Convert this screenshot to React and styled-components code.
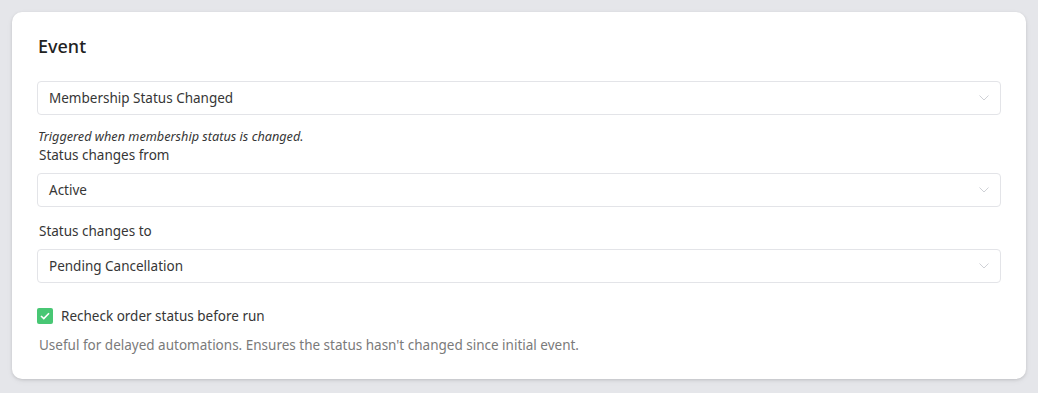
import React from "react";
import styled, { createGlobalStyle } from "styled-components";

const Global = createGlobalStyle`
  html, body { margin: 0; padding: 0; background: #e5e6ea; }
  body { font-family: "Noto Sans", "Open Sans", sans-serif; }
  * { box-sizing: border-box; }
`;

const Page = styled.div`
  padding: 12px 12px 15px 12px;
  min-height: 393px;
  background: #e5e6ea;
`;

const Card = styled.section`
  background: #ffffff;
  border-radius: 10px;
  box-shadow: 0 1px 3px rgba(0, 0, 0, 0.12), 0 2px 6px rgba(0, 0, 0, 0.05);
  padding: 24px 25px 26px 25px;
  display: flex;
  flex-direction: column;
`;

const Title = styled.h2`
  margin: 0 0 25px 1px;
  font-size: 18px;
  line-height: 20px;
  font-weight: 500;
  color: #222;
`;

const SelectBox = styled.div`
  height: 34px;
  border: 1px solid #e3e4e8;
  border-radius: 4px;
  display: flex;
  align-items: center;
  justify-content: space-between;
  padding: 0 11px 0 11px;
  font-size: 13.5px;
  color: #363636;
`;

const Chevron = () => (
  <svg width="10" height="6" viewBox="0 0 10 6" fill="none">
    <path d="M0.5 0.5 L5 5 L9.5 0.5" stroke="#cfd1d6" strokeWidth="1" />
  </svg>
);

const Hint = styled.p`
  margin: 13px 0 0 1px;
  font-size: 12.7px;
  line-height: 17px;
  font-style: italic;
  color: #363636;
`;

const Label = styled.label`
  display: block;
  margin: ${(p) => p.$mt || 0}px 0 8px 2px;
  font-size: 13.5px;
  line-height: 20px;
  color: #363636;
`;

const CheckRow = styled.div`
  display: flex;
  align-items: center;
  gap: 8px;
  margin-top: 23px;
  font-size: 13.5px;
  line-height: 20px;
  color: #363636;
`;

const Box = styled.span`
  width: 16px;
  height: 16px;
  border-radius: 2px;
  background: #48c774;
  display: inline-flex;
  align-items: center;
  justify-content: center;
`;

const Help = styled.p`
  margin: 11px 0 0 2px;
  font-size: 13.5px;
  line-height: 16px;
  color: #7a7a7a;
`;

function Select({ value }) {
  return (
    <SelectBox>
      <span>{value}</span>
      <Chevron />
    </SelectBox>
  );
}

export default function App() {
  return (
    <>
      <Global />
      <Page>
        <Card>
          <Title>Event</Title>
          <Select value="Membership Status Changed" />
          <Hint>Triggered when membership status is changed.</Hint>
          <Label>Status changes from</Label>
          <Select value="Active" />
          <Label $mt={14}>Status changes to</Label>
          <Select value="Pending Cancellation" />
          <CheckRow>
            <Box>
              <svg width="10" height="8" viewBox="0 0 10 8" fill="none">
                <path d="M1 4 L3.8 6.6 L9 1.2" stroke="#fff" strokeWidth="1.6" />
              </svg>
            </Box>
            <span>Recheck order status before run</span>
          </CheckRow>
          <Help>Useful for delayed automations. Ensures the status hasn't changed since initial event.</Help>
        </Card>
      </Page>
    </>
  );
}
